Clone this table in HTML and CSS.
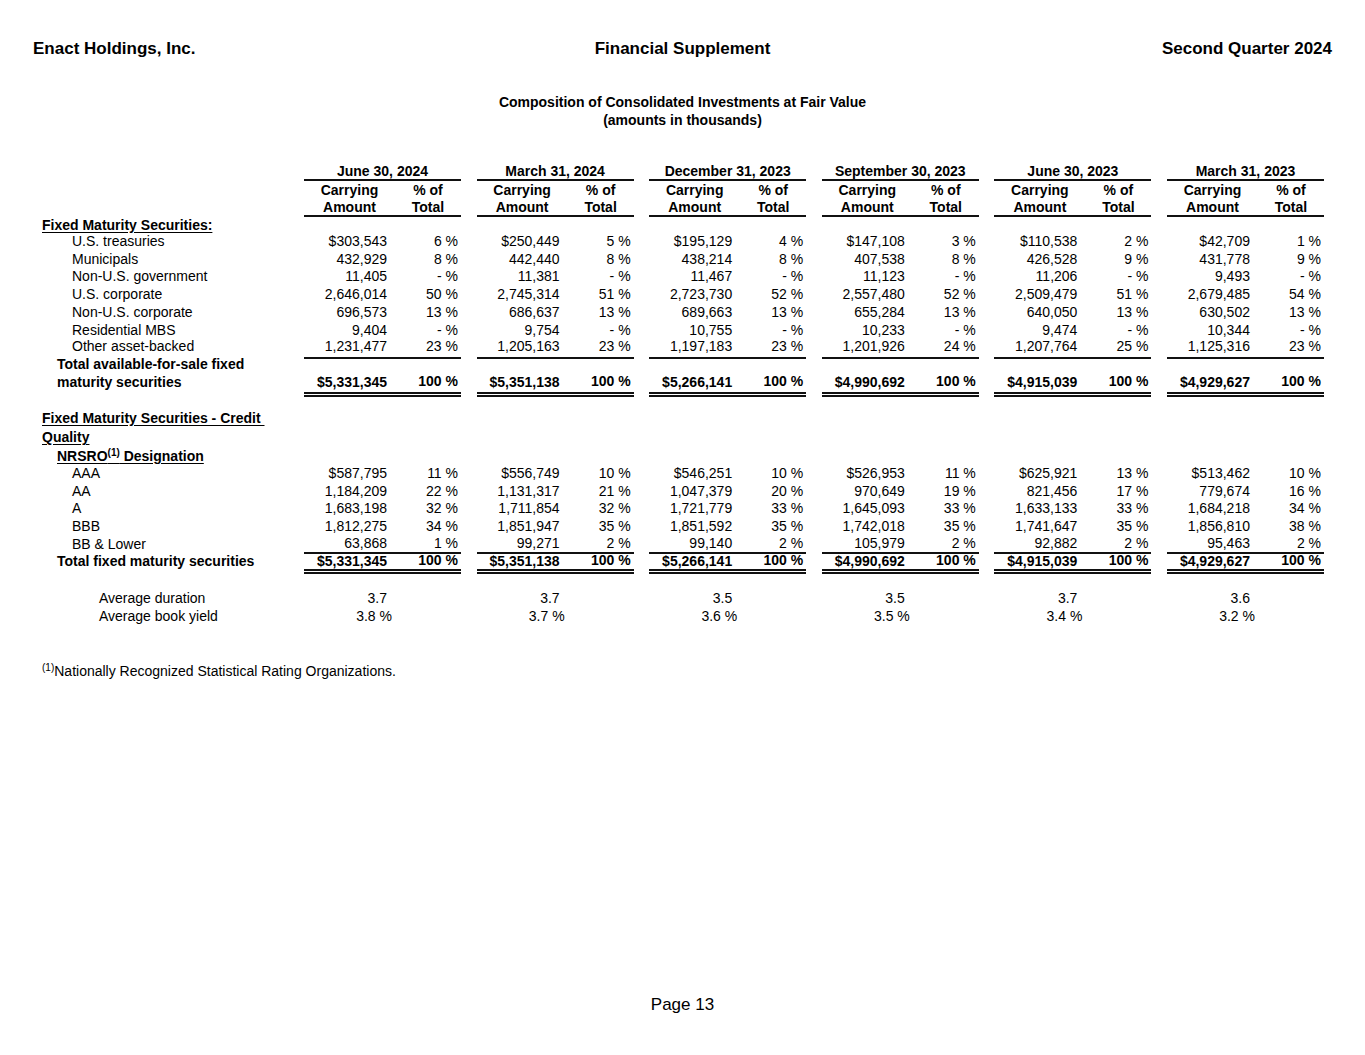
FILE: index.html
```html
<!DOCTYPE html>
<html lang="en">
<head>
<meta charset="utf-8">
<title>Financial Supplement - Page 13</title>
<link rel="stylesheet" href="styles.css">
</head>
<body>
<div class="page">
  <header class="top">
    <div class="l">Enact Holdings, Inc.</div>
    <div class="m">Financial Supplement</div>
    <div class="r">Second Quarter 2024</div>
  </header>
  <div class="title">Composition of Consolidated Investments at Fair Value<br>(amounts in thousands)</div>

  <table class="fin">
    <colgroup>
      <col class="w-lab">
      <col class="w-c"><col class="w-p"><col class="w-s">
      <col class="w-c"><col class="w-p"><col class="w-s">
      <col class="w-c"><col class="w-p"><col class="w-s">
      <col class="w-c"><col class="w-p"><col class="w-s">
      <col class="w-c"><col class="w-p"><col class="w-s">
      <col class="w-c"><col class="w-p">
    </colgroup>
    <tbody>
      <tr class="r-date">
        <td></td>
        <td class="d" colspan="2">June 30, 2024</td><td></td>
        <td class="d" colspan="2">March 31, 2024</td><td></td>
        <td class="d" colspan="2">December 31, 2023</td><td></td>
        <td class="d" colspan="2">September 30, 2023</td><td></td>
        <td class="d" colspan="2">June 30, 2023</td><td></td>
        <td class="d" colspan="2">March 31, 2023</td>
      </tr>
      <tr class="r-h1">
        <td></td>
        <td class="h">Carrying</td><td class="h">% of</td><td></td>
        <td class="h">Carrying</td><td class="h">% of</td><td></td>
        <td class="h">Carrying</td><td class="h">% of</td><td></td>
        <td class="h">Carrying</td><td class="h">% of</td><td></td>
        <td class="h">Carrying</td><td class="h">% of</td><td></td>
        <td class="h">Carrying</td><td class="h">% of</td>
      </tr>
      <tr class="r-h2 rule">
        <td></td>
        <td class="h c0">Amount</td><td class="h p0">Total</td><td></td>
        <td class="h c0">Amount</td><td class="h p0">Total</td><td></td>
        <td class="h c0">Amount</td><td class="h p0">Total</td><td></td>
        <td class="h c0">Amount</td><td class="h p0">Total</td><td></td>
        <td class="h c0">Amount</td><td class="h p0">Total</td><td></td>
        <td class="h c0">Amount</td><td class="h p0">Total</td>
      </tr>
      <tr class="r-sec">
        <td class="lab l1"><span class="u b">Fixed Maturity Securities:</span></td>
        <td colspan="17"></td>
      </tr>
      <tr class="r-d">
        <td class="lab l3">U.S. treasuries</td>
        <td class="c">$303,543</td><td class="p">6 %</td><td></td>
        <td class="c">$250,449</td><td class="p">5 %</td><td></td>
        <td class="c">$195,129</td><td class="p">4 %</td><td></td>
        <td class="c">$147,108</td><td class="p">3 %</td><td></td>
        <td class="c">$110,538</td><td class="p">2 %</td><td></td>
        <td class="c">$42,709</td><td class="p">1 %</td>
      </tr>
      <tr class="r-d">
        <td class="lab l3">Municipals</td>
        <td class="c">432,929</td><td class="p">8 %</td><td></td>
        <td class="c">442,440</td><td class="p">8 %</td><td></td>
        <td class="c">438,214</td><td class="p">8 %</td><td></td>
        <td class="c">407,538</td><td class="p">8 %</td><td></td>
        <td class="c">426,528</td><td class="p">9 %</td><td></td>
        <td class="c">431,778</td><td class="p">9 %</td>
      </tr>
      <tr class="r-d">
        <td class="lab l3">Non-U.S. government</td>
        <td class="c">11,405</td><td class="p">- %</td><td></td>
        <td class="c">11,381</td><td class="p">- %</td><td></td>
        <td class="c">11,467</td><td class="p">- %</td><td></td>
        <td class="c">11,123</td><td class="p">- %</td><td></td>
        <td class="c">11,206</td><td class="p">- %</td><td></td>
        <td class="c">9,493</td><td class="p">- %</td>
      </tr>
      <tr class="r-d">
        <td class="lab l3">U.S. corporate</td>
        <td class="c">2,646,014</td><td class="p">50 %</td><td></td>
        <td class="c">2,745,314</td><td class="p">51 %</td><td></td>
        <td class="c">2,723,730</td><td class="p">52 %</td><td></td>
        <td class="c">2,557,480</td><td class="p">52 %</td><td></td>
        <td class="c">2,509,479</td><td class="p">51 %</td><td></td>
        <td class="c">2,679,485</td><td class="p">54 %</td>
      </tr>
      <tr class="r-d">
        <td class="lab l3">Non-U.S. corporate</td>
        <td class="c">696,573</td><td class="p">13 %</td><td></td>
        <td class="c">686,637</td><td class="p">13 %</td><td></td>
        <td class="c">689,663</td><td class="p">13 %</td><td></td>
        <td class="c">655,284</td><td class="p">13 %</td><td></td>
        <td class="c">640,050</td><td class="p">13 %</td><td></td>
        <td class="c">630,502</td><td class="p">13 %</td>
      </tr>
      <tr class="r-d">
        <td class="lab l3">Residential MBS</td>
        <td class="c">9,404</td><td class="p">- %</td><td></td>
        <td class="c">9,754</td><td class="p">- %</td><td></td>
        <td class="c">10,755</td><td class="p">- %</td><td></td>
        <td class="c">10,233</td><td class="p">- %</td><td></td>
        <td class="c">9,474</td><td class="p">- %</td><td></td>
        <td class="c">10,344</td><td class="p">- %</td>
      </tr>
      <tr class="r-d last rule">
        <td class="lab l3">Other asset-backed</td>
        <td class="c">1,231,477</td><td class="p">23 %</td><td></td>
        <td class="c">1,205,163</td><td class="p">23 %</td><td></td>
        <td class="c">1,197,183</td><td class="p">23 %</td><td></td>
        <td class="c">1,201,926</td><td class="p">24 %</td><td></td>
        <td class="c">1,207,764</td><td class="p">25 %</td><td></td>
        <td class="c">1,125,316</td><td class="p">23 %</td>
      </tr>
      <tr class="r-tot1 dbl">
        <td class="lab l2 b"><div class="two"><div>Total available-for-sale fixed</div><div>maturity securities</div></div></td>
        <td class="c b">$5,331,345</td><td class="p b">100 %</td><td></td>
        <td class="c b">$5,351,138</td><td class="p b">100 %</td><td></td>
        <td class="c b">$5,266,141</td><td class="p b">100 %</td><td></td>
        <td class="c b">$4,990,692</td><td class="p b">100 %</td><td></td>
        <td class="c b">$4,915,039</td><td class="p b">100 %</td><td></td>
        <td class="c b">$4,929,627</td><td class="p b">100 %</td>
      </tr>
      <tr class="r-gap1"><td colspan="18"></td></tr>
      <tr class="r-sec2">
        <td class="lab l1"><span class="u b">Fixed Maturity Securities - Credit&nbsp;</span></td>
        <td colspan="17"></td>
      </tr>
      <tr class="r-sec2">
        <td class="lab l1"><span class="u b">Quality</span></td>
        <td colspan="17"></td>
      </tr>
      <tr class="r-sec3">
        <td class="lab l2"><span class="u b">NRSRO<sup>(1)</sup> Designation</span></td>
        <td colspan="17"></td>
      </tr>
      <tr class="r-q">
        <td class="lab l3">AAA</td>
        <td class="c">$587,795</td><td class="p">11 %</td><td></td>
        <td class="c">$556,749</td><td class="p">10 %</td><td></td>
        <td class="c">$546,251</td><td class="p">10 %</td><td></td>
        <td class="c">$526,953</td><td class="p">11 %</td><td></td>
        <td class="c">$625,921</td><td class="p">13 %</td><td></td>
        <td class="c">$513,462</td><td class="p">10 %</td>
      </tr>
      <tr class="r-q">
        <td class="lab l3">AA</td>
        <td class="c">1,184,209</td><td class="p">22 %</td><td></td>
        <td class="c">1,131,317</td><td class="p">21 %</td><td></td>
        <td class="c">1,047,379</td><td class="p">20 %</td><td></td>
        <td class="c">970,649</td><td class="p">19 %</td><td></td>
        <td class="c">821,456</td><td class="p">17 %</td><td></td>
        <td class="c">779,674</td><td class="p">16 %</td>
      </tr>
      <tr class="r-q">
        <td class="lab l3">A</td>
        <td class="c">1,683,198</td><td class="p">32 %</td><td></td>
        <td class="c">1,711,854</td><td class="p">32 %</td><td></td>
        <td class="c">1,721,779</td><td class="p">33 %</td><td></td>
        <td class="c">1,645,093</td><td class="p">33 %</td><td></td>
        <td class="c">1,633,133</td><td class="p">33 %</td><td></td>
        <td class="c">1,684,218</td><td class="p">34 %</td>
      </tr>
      <tr class="r-q">
        <td class="lab l3">BBB</td>
        <td class="c">1,812,275</td><td class="p">34 %</td><td></td>
        <td class="c">1,851,947</td><td class="p">35 %</td><td></td>
        <td class="c">1,851,592</td><td class="p">35 %</td><td></td>
        <td class="c">1,742,018</td><td class="p">35 %</td><td></td>
        <td class="c">1,741,647</td><td class="p">35 %</td><td></td>
        <td class="c">1,856,810</td><td class="p">38 %</td>
      </tr>
      <tr class="r-q last rule">
        <td class="lab l3">BB &amp; Lower</td>
        <td class="c">63,868</td><td class="p">1 %</td><td></td>
        <td class="c">99,271</td><td class="p">2 %</td><td></td>
        <td class="c">99,140</td><td class="p">2 %</td><td></td>
        <td class="c">105,979</td><td class="p">2 %</td><td></td>
        <td class="c">92,882</td><td class="p">2 %</td><td></td>
        <td class="c">95,463</td><td class="p">2 %</td>
      </tr>
      <tr class="r-tot2 dbl">
        <td class="lab l2 b">Total fixed maturity securities</td>
        <td class="c b">$5,331,345</td><td class="p b">100 %</td><td></td>
        <td class="c b">$5,351,138</td><td class="p b">100 %</td><td></td>
        <td class="c b">$5,266,141</td><td class="p b">100 %</td><td></td>
        <td class="c b">$4,990,692</td><td class="p b">100 %</td><td></td>
        <td class="c b">$4,915,039</td><td class="p b">100 %</td><td></td>
        <td class="c b">$4,929,627</td><td class="p b">100 %</td>
      </tr>
      <tr class="r-gap2"><td colspan="18"></td></tr>
      <tr class="r-avg">
        <td class="lab l4">Average duration</td>
        <td class="c">3.7</td><td></td><td></td>
        <td class="c">3.7</td><td></td><td></td>
        <td class="c">3.5</td><td></td><td></td>
        <td class="c">3.5</td><td></td><td></td>
        <td class="c">3.7</td><td></td><td></td>
        <td class="c">3.6</td><td></td>
      </tr>
      <tr class="r-avg">
        <td class="lab l4">Average book yield</td>
        <td class="cy">3.8 %</td><td></td><td></td>
        <td class="cy">3.7 %</td><td></td><td></td>
        <td class="cy">3.6 %</td><td></td><td></td>
        <td class="cy">3.5 %</td><td></td><td></td>
        <td class="cy">3.4 %</td><td></td><td></td>
        <td class="cy">3.2 %</td><td></td>
      </tr>
    </tbody>
  </table>

  <p class="note"><sup>(1)</sup>Nationally Recognized Statistical Rating Organizations.</p>

  <footer class="pg">Page 13</footer>
</div>
</body>
</html>
```

FILE: styles.css
```css
* { box-sizing: border-box; }
html, body { margin: 0; padding: 0; background: #fff; }
body {
  font-family: "Liberation Sans", Arial, Helvetica, sans-serif;
  color: #000;
}
.page {
  height: 1055px;
  display: flex;
  flex-direction: column;
  padding: 39px 33px 40px 33px;
}
.top {
  display: grid;
  grid-template-columns: 1fr auto 1fr;
  font-size: 17px;
  font-weight: bold;
  line-height: 20px;
}
.top .l { justify-self: start; }
.top .m { justify-self: center; }
.top .r { justify-self: end; }

.title {
  margin-top: 34px;
  text-align: center;
  font-size: 14px;
  font-weight: bold;
  line-height: 18px;
}

.fin {
  margin-top: 34px;
  border-collapse: separate;
  border-spacing: 0;
  table-layout: fixed;
  width: 1291px;
  font-size: 14px;
}
.w-lab { width: 271px; }
.w-c { width: 91px; }
.w-p { width: 66px; }
.w-s { width: 15.6px; }

.fin td {
  padding: 0;
  white-space: nowrap;
  vertical-align: middle;
  line-height: 16px;
}
.b { font-weight: bold; }
.u { text-decoration: underline; text-underline-offset: 2px; }

.d { text-align: center; font-weight: bold; border-bottom: 2px solid #111; }
.h { text-align: center; font-weight: bold; }
.c { text-align: right; padding-right: 8px !important; }
.p { text-align: right; padding-right: 3px !important; }
.cy { text-align: right; padding-right: 3px !important; }

.rule td.c, .rule td.p, .rule td.c0, .rule td.p0 { border-bottom: 2px solid #111; }
.dbl td.c, .dbl td.p { border-bottom: 5px double #111; }

.lab.l1 { padding-left: 9px; }
.lab.l2 { padding-left: 24px; }
.lab.l3 { padding-left: 39px; }
.lab.l4 { padding-left: 66px; }

sup { font-size: 10px; line-height: 0; vertical-align: 5px; }

/* row heights */
.r-date td { height: 18px; }
.r-h1 td { height: 17px; }
.r-h2 td { height: 19px; vertical-align: bottom; }
.r-sec td { height: 15px; line-height: 14px; }
.r-d td { height: 17.8px; }
.r-d.last td { height: 19.8px; line-height: 14px; vertical-align: top; }
.r-tot1 td { height: 38px; vertical-align: bottom; line-height: 18px; }
.r-tot1 td.c { padding-bottom: 1px; }
.r-tot1 td.p { padding-bottom: 2px; }
.r-tot1 td.lab { vertical-align: top; }
.two { margin-top: -2px; }
.two > div { line-height: 14px; }
.two > div + div { margin-top: 4px; }
.r-gap1 td { height: 12px; line-height: 10px; }
.r-sec2 td { height: 19px; }
.r-sec3 td { height: 18px; }
.r-q td { height: 17.5px; }
.r-q.last td { height: 19.5px; }
.r-tot2 td { height: 20px; line-height: 14px; }
.r-tot2 td.c { line-height: 15px; }
.r-tot2 td.p { padding-bottom: 2px; line-height: 13px; }
.r-tot2 td.lab { padding-bottom: 6px; }
.r-gap2 td { height: 15px; line-height: 12px; }
.r-avg td { height: 18px; }

.note {
  margin: 37px 0 0 9px;
  font-size: 14px;
  line-height: 18px;
}

.pg {
  margin-top: auto;
  text-align: center;
  font-size: 17px;
  line-height: 20px;
}
```
